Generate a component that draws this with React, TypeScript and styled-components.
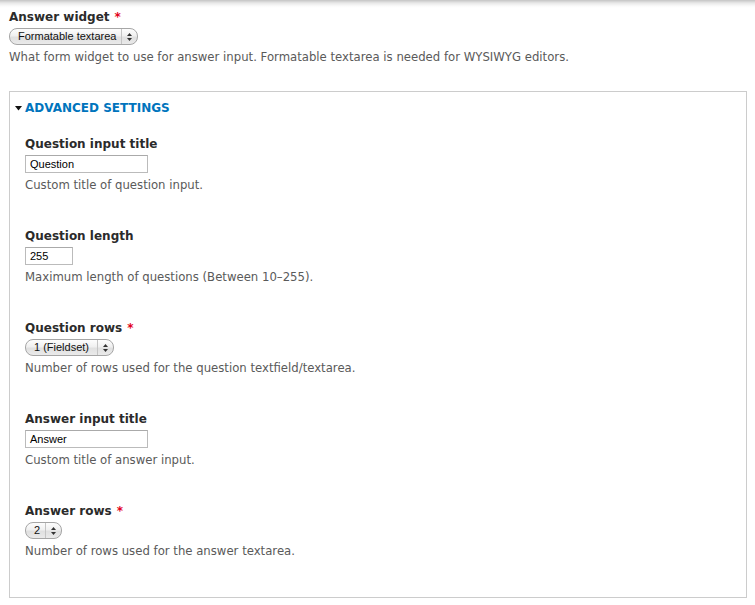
import React from "react";
import styled, { createGlobalStyle } from "styled-components";

const Global = createGlobalStyle`
  html, body { margin: 0; padding: 0; background: #fff; }
  body { font-family: "DejaVu Sans", sans-serif; }
`;

const Page = styled.div`
  width: 755px;
  height: 605px;
  box-sizing: border-box;
  padding: 8px 9px 0 9px;
  background: linear-gradient(to bottom, #c4c4c4 0px, #e8e8e8 3px, #fafafa 6px, #fff 8px);
  overflow: hidden;
`;

const FormItem = styled.div<{ $gap?: number }>`
  display: flex;
  flex-direction: column;
  align-items: flex-start;
  margin-bottom: ${(p) => p.$gap ?? 0}px;
`;

const Label = styled.label`
  font-family: "DejaVu Sans", sans-serif;
  font-weight: bold;
  font-size: 12px;
  line-height: 16px;
  padding-top: 1px;
  color: #2b2b2b;
  margin-bottom: 3px;
`;

const Req = styled.span`
  color: #e2001a;
  margin-left: 5px;
`;

const Description = styled.div`
  font-family: "DejaVu Sans", sans-serif;
  font-size: 11.7px;
  line-height: 15px;
  color: #5a5a5a;
  margin-top: 5px;
`;

const TextInput = styled.div<{ $w: number }>`
  width: ${(p) => p.$w}px;
  height: 18px;
  box-sizing: border-box;
  border: 1px solid #bbb;
  border-top-color: #aaa;
  padding: 0 4px;
  font-family: "Liberation Sans", Arial, sans-serif;
  font-size: 11px;
  line-height: 16px;
  color: #000;
  background: #fff;
`;

const Select = styled.div<{ $w: number }>`
  width: ${(p) => p.$w}px;
  height: 17px;
  box-sizing: border-box;
  border: 1px solid #a6a6a6;
  border-radius: 8px;
  background: linear-gradient(to bottom, #fdfdfd 0%, #f0f0f0 45%, #e0e0e0 55%, #eaeaea 100%);
  display: flex;
  align-items: stretch;
  font-family: "Liberation Sans", Arial, sans-serif;
  font-size: 11px;
  color: #111;
`;

const SelectText = styled.span`
  flex: 1;
  padding-left: 8px;
  line-height: 15px;
  white-space: nowrap;
`;

const SelectArrows = styled.span`
  width: 15px;
  border-left: 1px solid #c4c4c4;
  display: flex;
  align-items: center;
  justify-content: center;
`;

const Fieldset = styled.div`
  margin-top: 26px;
  border: 1px solid #ccc;
  height: 507px;
  box-sizing: border-box;
  width: 738px;
`;

const Legend = styled.div`
  display: flex;
  align-items: center;
  gap: 3px;
  padding: 8px 0 0 5px;
  height: 16px;
  line-height: 16px;
  font-family: "DejaVu Sans", sans-serif;
  font-weight: bold;
  font-size: 12px;
  color: #0074bd;
  text-transform: uppercase;
`;

const Body = styled.div`
  padding: 19px 15px 0 15px;
`;

const Arrows = () => (
  <svg width="7" height="10" viewBox="0 0 7 10">
    <path d="M3.5 1 L6 4 L1 4 Z" fill="#333" />
    <path d="M3.5 9 L6 6 L1 6 Z" fill="#333" />
  </svg>
);

const Triangle = () => (
  <svg width="7" height="5" viewBox="0 0 7 5">
    <path d="M0 0 L7 0 L3.5 4.5 Z" fill="#111" />
  </svg>
);

const FakeSelect = ({ w, text }: { w: number; text: string }) => (
  <Select $w={w}>
    <SelectText>{text}</SelectText>
    <SelectArrows>
      <Arrows />
    </SelectArrows>
  </Select>
);

export default function App() {
  return (
    <>
      <Global />
      <Page>
        <FormItem>
          <Label>
            Answer widget<Req>*</Req>
          </Label>
          <FakeSelect w={129} text="Formatable textarea" />
          <Description>
            What form widget to use for answer input. Formatable textarea is needed for WYSIWYG editors.
          </Description>
        </FormItem>
        <Fieldset>
          <Legend>
            <Triangle />
            Advanced settings
          </Legend>
          <Body>
            <FormItem $gap={34}>
              <Label>Question input title</Label>
              <TextInput $w={123}>Question</TextInput>
              <Description>Custom title of question input.</Description>
            </FormItem>
            <FormItem $gap={34}>
              <Label>Question length</Label>
              <TextInput $w={48}>255</TextInput>
              <Description>Maximum length of questions (Between 10–255).</Description>
            </FormItem>
            <FormItem $gap={34}>
              <Label>
                Question rows<Req>*</Req>
              </Label>
              <FakeSelect w={89} text="1 (Fieldset)" />
              <Description>Number of rows used for the question textfield/textarea.</Description>
            </FormItem>
            <FormItem $gap={34}>
              <Label>Answer input title</Label>
              <TextInput $w={123}>Answer</TextInput>
              <Description>Custom title of answer input.</Description>
            </FormItem>
            <FormItem>
              <Label>
                Answer rows<Req>*</Req>
              </Label>
              <FakeSelect w={37} text="2" />
              <Description>Number of rows used for the answer textarea.</Description>
            </FormItem>
          </Body>
        </Fieldset>
      </Page>
    </>
  );
}
